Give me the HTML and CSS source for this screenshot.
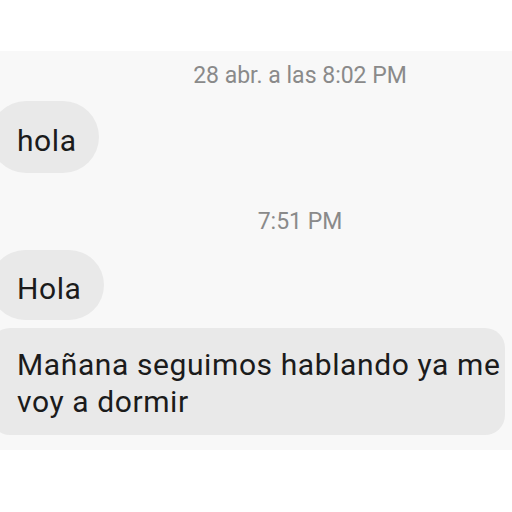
FILE: index.html
```html
<!DOCTYPE html>
<html lang="es">
<head>
<meta charset="utf-8">
<link rel="stylesheet" href="styles.css">
</head>
<body>
<div class="top"></div>
<main class="chat">
  <div class="stamp stamp-first">28 abr. a las 8:02 PM</div>
  <div class="bubble round first">hola</div>
  <div class="stamp stamp-second">7:51 PM</div>
  <div class="bubble round second">Hola</div>
  <div class="bubble long">Mañana seguimos hablando ya me voy a dormir</div>
</main>
</body>
</html>
```

FILE: styles.css
```css
html, body {
  margin: 0;
  padding: 0;
  background: #ffffff;
}
body {
  width: 512px;
  height: 512px;
  overflow: hidden;
  font-family: Roboto, "Noto Sans", "Liberation Sans", sans-serif;
}
.top {
  height: 51px;
  background: #ffffff;
}
.chat {
  background: #f8f8f8;
  height: 399px;
  padding-top: 10px;
  box-sizing: border-box;
  display: flex;
  flex-direction: column;
  align-items: flex-start;
}
.stamp {
  align-self: stretch;
  padding-left: 88px;
  text-align: center;
  font-size: 23px;
  line-height: 30px;
  color: #8a8a8a;
}
.stamp-second {
  margin-top: 34px;
}
.bubble {
  background: #e9e9e9;
  color: #1b1b1b;
  font-size: 30px;
  line-height: 37px;
  letter-spacing: 0.6px;
  margin-left: -10px;
}
.round {
  border-radius: 36px;
  padding-left: 27px;
  padding-right: 22px;
}
.first {
  margin-top: 10px;
  padding-top: 21px;
  padding-bottom: 14px;
}
.second {
  margin-top: 13px;
  padding-top: 20px;
  padding-bottom: 13px;
}
.long {
  margin-top: 8px;
  width: 515px;
  box-sizing: border-box;
  border-radius: 20px;
  padding: 18px 0 15px 27px;
}
```
